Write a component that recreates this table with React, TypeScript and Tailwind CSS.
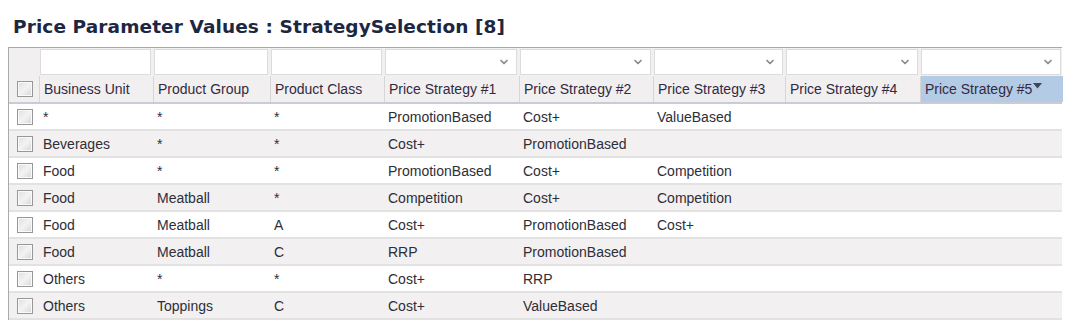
import { ChevronDown } from "lucide-react";

const columns = [
  { key: "bu", label: "Business Unit", w: "w-[114px]", select: false },
  { key: "pg", label: "Product Group", w: "w-[117px]", select: false },
  { key: "pc", label: "Product Class", w: "w-[114px]", select: false },
  { key: "s1", label: "Price Strategy #1", w: "w-[135px]", select: true },
  { key: "s2", label: "Price Strategy #2", w: "w-[134px]", select: true },
  { key: "s3", label: "Price Strategy #3", w: "w-[132px]", select: true },
  { key: "s4", label: "Price Strategy #4", w: "w-[135px]", select: true },
  { key: "s5", label: "Price Strategy #5", w: "w-[143px]", select: true },
];

const rows = [
  ["*", "*", "*", "PromotionBased", "Cost+", "ValueBased", "", ""],
  ["Beverages", "*", "*", "Cost+", "PromotionBased", "", "", ""],
  ["Food", "*", "*", "PromotionBased", "Cost+", "Competition", "", ""],
  ["Food", "Meatball", "*", "Competition", "Cost+", "Competition", "", ""],
  ["Food", "Meatball", "A", "Cost+", "PromotionBased", "Cost+", "", ""],
  ["Food", "Meatball", "C", "RRP", "PromotionBased", "", "", ""],
  ["Others", "*", "*", "Cost+", "RRP", "", "", ""],
  ["Others", "Toppings", "C", "Cost+", "ValueBased", "", "", ""],
];

const Check = () => (
  <div className="size-[16px] ml-[1px] border border-[#979797] bg-gradient-to-br from-[#dedede] via-[#f3f3f3] to-[#d6d6d6] shadow-[inset_0_0_0_1px_#fafafa]" />
);

export default function App() {
  return (
    <div className="w-[1069px] h-[326px] bg-white overflow-hidden font-['Liberation_Sans',Arial,sans-serif] text-[14px] text-[#2e2e38]">
      <h1 className="pl-[13px] pt-[15px] h-[47px] font-['DejaVu_Sans',Verdana,sans-serif] font-bold text-[18.5px] leading-[24px] text-[#1d2742] tracking-[0.1px]">
        Price Parameter Values : StrategySelection [8]
      </h1>
      <div className="ml-[8px] w-[1054px] border-t border-l border-[#aaaaaa]">
        {/* filter row */}
        <div className="flex h-[28px] bg-[#f1efef]">
          <div className="w-[30px] shrink-0" />
          {columns.map((c) => (
            <div key={c.key} className={`${c.w} shrink-0 p-[1px] pr-[2px]`}>
              <div className="h-full bg-white border border-[#dcdcdc] flex items-center justify-end pr-[6px]">
                {c.select && <ChevronDown size={12} strokeWidth={3.4} className="text-[#8a8a8a]" />}
              </div>
            </div>
          ))}
        </div>
        {/* header row */}
        <div className="flex h-[28px] bg-[#f1efef] border-b-2 border-[#c9ccd6]">
          <div className="w-[30px] shrink-0 flex items-center justify-center">
            <Check />
          </div>
          {columns.map((c) => (
            <div
              key={c.key}
              className={`${c.w} shrink-0 flex items-center pl-[4px] border-l border-[#d6d6d6] ${
                c.key === "s5" ? "bg-[#b3cbe4]" : ""
              } text-[#332a42]`}
            >
              {c.label}
              {c.key === "s5" && (
                <svg width="9" height="6" viewBox="0 0 9 6" className="mb-[6px] ml-[1px]">
                  <path d="M0 0h9L4.5 5.5z" fill="#3c4858" />
                </svg>
              )}
            </div>
          ))}
        </div>
        {/* data rows */}
        {rows.map((r, i) => (
          <div
            key={i}
            className={`flex h-[27px] pt-[1px] border-b-2 border-[#e2e2e2] ${i % 2 ? "bg-[#f2f0f0]" : "bg-white"}`}
          >
            <div className="w-[30px] shrink-0 flex items-center justify-center">
              <Check />
            </div>
            {columns.map((c, j) => (
              <div key={c.key} className={`${c.w} shrink-0 flex items-center pl-[4px]`}>
                {r[j]}
              </div>
            ))}
          </div>
        ))}
      </div>
    </div>
  );
}
